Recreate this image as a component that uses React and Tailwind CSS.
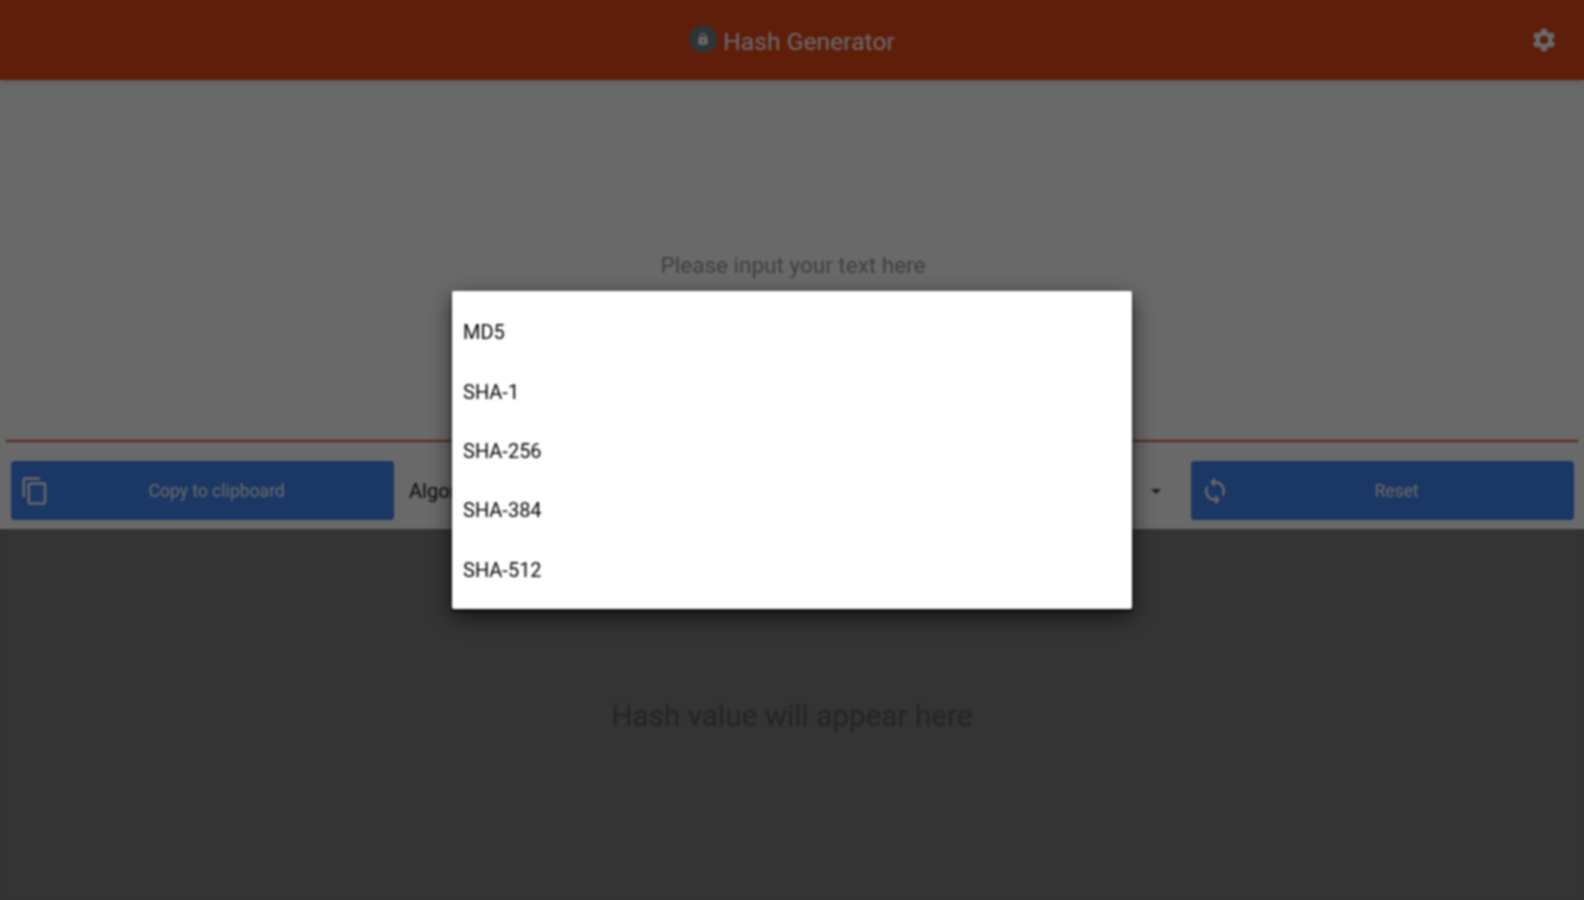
import { MdSettings, MdContentCopy, MdSync, MdLock, MdArrowDropDown } from "react-icons/md";

const algorithms = ["MD5", "SHA-1", "SHA-256", "SHA-384", "SHA-512"];

function ActionButton({ icon, label }) {
    return (
        <button className="flex items-center h-[59px] w-[383px] pl-[9px] pr-[11px] rounded-[4px] bg-[#4285f4] text-white">
            {icon}
            <span className="flex-1 text-center text-[17.5px] pt-0.5">{label}</span>
        </button>
    );
}

export default function App() {
    return (
        <div className="relative h-[900px] w-full overflow-hidden bg-white font-['Roboto',sans-serif]">
            <header className="flex items-center justify-center relative h-[80px] bg-[#e64a19] text-white shadow-md z-10">
                <div className="flex items-center gap-1.5 pt-[3px]">
                    <span className="flex items-center justify-center w-7 h-7 rounded-full bg-[#6f7f87] mt-[-4px]">
                        <MdLock size={14} />
                    </span>
                    <span className="text-[24.7px]">Hash Generator</span>
                </div>
                <MdSettings size={28} className="absolute right-[26px] top-[26px]" />
            </header>

            <div className="flex items-center justify-center h-[362px] pt-3 pl-0.5 mx-1.5 border-b-2 border-[#e8503a]">
                <span className="text-[22.5px] text-[#9e9e9e]">Please input your text here</span>
            </div>

            <div className="flex items-center h-[87px] pt-2.5 pl-[11px] pr-2.5 gap-4">
                <ActionButton icon={<MdContentCopy size={30} className="shrink-0" />} label="Copy to clipboard" />
                <div className="flex flex-1 items-center justify-between pr-[7px] text-[20px] text-[#212121] ml-[-1px]">
                    <span>Algorithm</span>
                    <MdArrowDropDown size={24} className="text-[#424242]" />
                </div>
                <ActionButton icon={<MdSync size={30} className="shrink-0" />} label="Reset" />
            </div>

            <div className="flex items-center justify-center h-[371px] pt-1 bg-[#7e7e7e]">
                <span className="text-[29.7px] text-[#5a5a5a]">Hash value will appear here</span>
            </div>

            {/* dialog + scrim */}
            <div className="absolute inset-0 z-20 flex items-center justify-center bg-black/[0.59] backdrop-blur-[1px]">
                <ul className="w-[680px] pt-[12px] pb-[10px] bg-white rounded-[2px] blur-[0.8px] shadow-[0_2px_4px_rgba(0,0,0,0.8),0_8px_24px_rgba(0,0,0,0.6)]">
                    {algorithms.map((name) => (
                        <li key={name} className="flex items-center h-[59.4px] pl-[11px] text-[20px] text-black">{name}</li>
                    ))}
                </ul>
            </div>
        </div>
    );
}
